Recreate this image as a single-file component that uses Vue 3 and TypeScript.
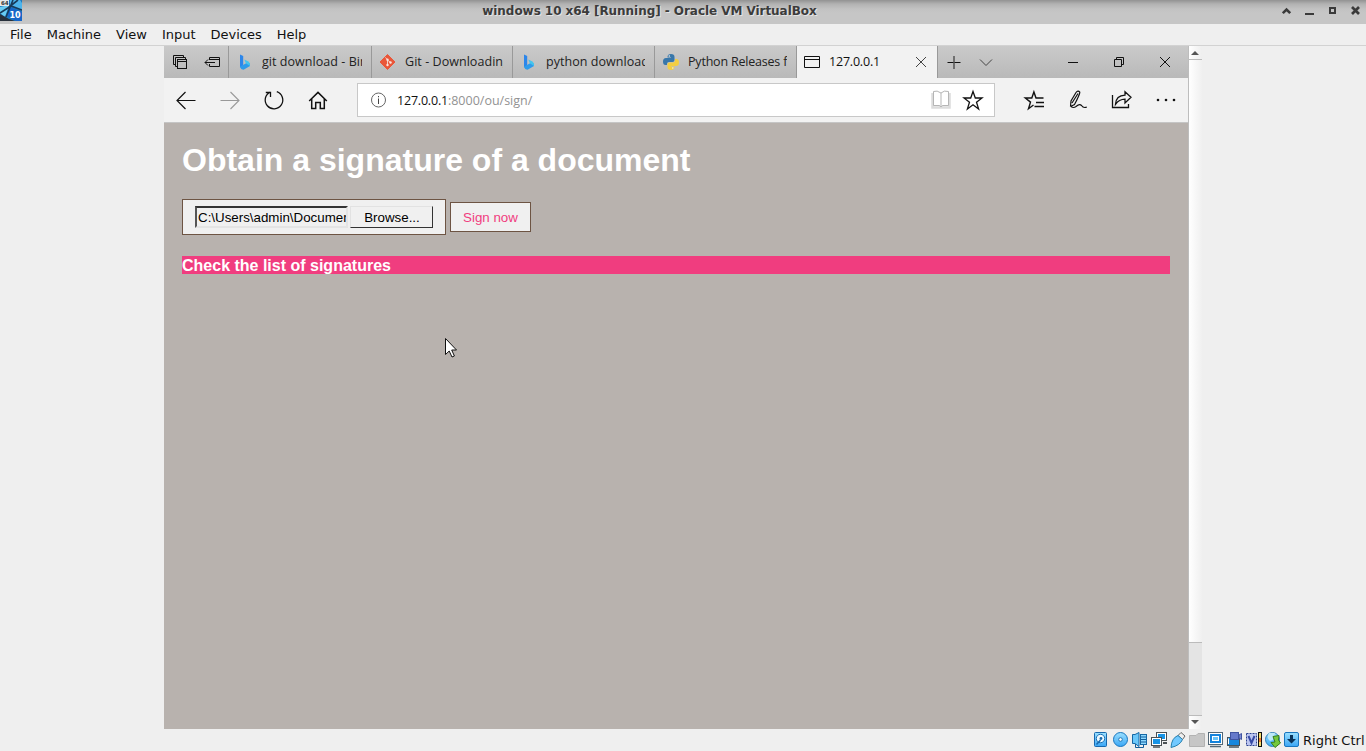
<script setup lang="ts">
interface BrowserTab {
  title: string
  icon: 'bing' | 'git' | 'python'
  width: number
}

const menus: string[] = ['File', 'Machine', 'View', 'Input', 'Devices', 'Help']

const tabs: BrowserTab[] = [
  { title: 'git download - Bing', icon: 'bing', width: 143 },
  { title: 'Git - Downloading', icon: 'git', width: 141 },
  { title: 'python download', icon: 'bing', width: 142 },
  { title: 'Python Releases for', icon: 'python', width: 142 },
]
</script>

<template>
  <div class="vm">
    <header class="titlebar">
      <svg class="app-icon" width="22" height="21" viewBox="0 0 22 21">
        <rect width="22" height="21" fill="#1d78bd" />
        <path d="M0 7L9 5L5 17L0 13Z" fill="#68cbf3" />
        <path d="M10 0H20L22 3V10L10 6Z" fill="#4db4ec" />
        <path d="M10 7L22 12V21H16L7 16Z" fill="#1665c8" />
        <path d="M0 14L9 19L15 21H0Z" fill="#28303c" />
        <path d="M13 0L6 17M0 13L11 6L22 10M9 7L18 0" stroke="#183a59" stroke-width="1.6" fill="none" />
        <rect width="9" height="6" fill="#e4e8ea" />
        <text x="1" y="5" font-size="5.5" class="icon-text" fill="#333">64</text>
        <text x="9.5" y="17.5" font-size="8" class="icon-text" fill="#fff">10</text>
      </svg>
      <h2>windows 10 x64 [Running] - Oracle VM VirtualBox</h2>
      <svg class="window-controls" width="84" height="24" viewBox="1282 0 84 24" fill="none" stroke="#3a3a3a">
        <path d="M1282.8 13.2L1286.5 9.5L1290.2 13.2" stroke-width="2.6" />
        <path d="M1305 14H1314" stroke-width="2" />
        <rect x="1330" y="8" width="5" height="5" stroke-width="2" />
        <path d="M1352 7L1359 14M1359 7L1352 14" stroke-width="2.7" />
      </svg>
    </header>

    <nav class="menubar"><span v-for="menu in menus" :key="menu">{{ menu }}</span></nav>

    <div class="viewport">
      <main class="guest">
        <div class="tabstrip">
          <svg class="tab-tools" width="64" height="32" viewBox="164 46 64 32" fill="none" stroke="#111">
            <path d="M175.500 64.500H173.500V55.500H183.500V57.500M177.500 66.500H175.500V57.500H185.500V59.500" />
            <rect x="177.500" y="59.500" width="9" height="9" />
            <path d="M177 61.500H187" />
            <path d="M209.500 60V57.500H219.500V66.500H209.500V64M209 59.500H220M205 62.500H215M208 59.500L205 62.500L208 65.500" />
          </svg>
          <div v-for="tab in tabs" :key="tab.title" class="tab" :class="tab.icon" :style="{ width: tab.width + 'px' }">
            <svg width="18" height="18" viewBox="0 0 18 18">
              <template v-if="tab.icon === 'bing'">
                <path d="M4 1.500L7.200 3V12.500L4 14.600Z" fill="#2c86ea" />
                <path d="M4 13.500L7 12L10.500 10L14 10.500V13L8 16.600Q5 17 4 14Z" fill="#2e9bea" />
                <path d="M8.300 6.500L12.500 8.500Q14.500 10 14 13L9.800 10.200Z" fill="#45c5ed" />
              </template>
              <template v-else-if="tab.icon === 'git'">
                <path d="M8.500 1.500L16 9L8.500 16.500L1 9Z" fill="#e9573a" stroke="#e9573a" stroke-linejoin="round" />
                <path d="M6.300 4.500L8.500 6.700V12M8.500 7L11.500 9.500" stroke="#f5cfc5" fill="none" />
                <g fill="#fae5df"><circle cx="8.500" cy="6.700" r="1.200" /><circle cx="8.500" cy="12" r="1.200" /><circle cx="11.500" cy="9.500" r="1.200" /></g>
              </template>
              <template v-else>
                <path d="M5.500 4Q5.500 1 9 1Q12.500 1 12.500 4V7Q12.500 9 10.500 9H7Q5 9 5 11V12H3.500Q1 12 1 8.500Q1 5 4 5H9V4.500H5.500Z" fill="#3877aa" />
                <path d="M12.500 14Q12.500 17 9 17Q5.500 17 5.500 14V11Q5.500 9.500 7.500 9.500H11Q13 9.500 13 7.500V6H14.500Q17 6 17 9.500Q17 13 14 13H9V13.500H12.500Z" fill="#f3ce42" />
                <circle cx="7.300" cy="3" r=".8" fill="#eee" /><circle cx="10.800" cy="15" r=".8" fill="#eee" />
              </template>
            </svg>
            <span>{{ tab.title }}</span>
          </div>
          <div class="tab active">
            <svg width="18" height="18" viewBox="0 0 18 18" fill="none" stroke="#111"><path d="M.5 3.500H15.500V14.500H.5ZM0 6.500H16" /></svg>
            <span>127.0.0.1</span>
            <svg class="close" width="12" height="12" viewBox="0 0 12 12" stroke="#444"><path d="M1 1L11 11M11 1L1 11" /></svg>
          </div>
          <svg class="strip-actions" width="250" height="32" viewBox="938 46 250 32" fill="none" stroke="#111">
            <path d="M947.500 62.500H960.500" /><path d="M954 56V69" stroke="#555" stroke-width="1.500" />
            <path d="M980 59.500L986 65.500L992 59.500" stroke="#444" />
            <path d="M1068 62.500H1078" />
            <path d="M1114.500 59.500H1121.500V66.500H1114.500ZM1116.500 59V57.500H1123.500V64.500H1122" />
            <path d="M1160 57L1170 67M1170 57L1160 67" />
          </svg>
        </div>

        <div class="navbar">
          <svg viewBox="0 0 44 44"><path d="M13 22.500H31.500M21.500 14L13 22.500L21.500 31" stroke-width="1.200" /></svg>
          <svg viewBox="0 0 44 44"><path class="disabled" d="M12.500 22.500H31M22.500 14L31 22.500L22.500 31" stroke-width="1.100" /></svg>
          <svg viewBox="0 0 44 44"><path d="M24.800 13.700A8.800 8.800 0 1 1 18.200 14.100M13.800 14.500H18.500V19" stroke-width="1.300" /></svg>
          <svg viewBox="0 0 44 44"><path d="M13.200 23L22 14.400L30.800 23M15.700 21V30.500H19.700V24.500H24.300V30.500H28.300V21" stroke-width="1.500" /></svg>
          <div class="address">
            <svg class="info" width="16" height="16" viewBox="0 0 16 16"><circle cx="8.500" cy="8" r="7" class="ring" /><path d="M8.500 6.500V12M8.500 4V5.300" /></svg>
            <p>127.0.0.1<span>:8000/ou/sign/</span></p>
            <svg class="book" width="20" height="20" viewBox="931 91 20 20"><path class="wide" d="M932.500 94V108.500H949.500V94" /><path d="M941 94V107M941 94Q937 91 933.500 92.500V106.500H939Q940 106.500 941 108Q942 106.500 943 106.500H948.500V92.500Q944 91 941 94" /></svg>
            <svg class="star" width="22" height="22" viewBox="962 89 22 22"><path d="M973 91.500L975.300 98H982L976.500 102.200L978.600 108.900L973 104.700L967.400 108.900L969.500 102.200L964 98H970.700Z" stroke-width="1.300" /></svg>
          </div>
          <svg viewBox="1012 78 44 44"><path d="M1043.500 98H1036L1033.900 91.900L1031.800 98H1025.300L1030.500 102.100L1028.500 108.700L1033.500 105M1036 102.500H1044M1034.500 106.500H1044" stroke-width="1.400" /></svg>
          <svg viewBox="1056 78 44 44"><path d="M1070.500 106.500L1071 101L1076 92.500Q1078 90 1079.800 92.200Q1080 94 1074.500 104.500L1070.500 106.500M1078 93.500L1072 103M1071 106.500Q1073.500 108.500 1076 106.500Q1079.500 103.500 1081.500 105.500Q1083.500 108.500 1086.800 107" stroke-width="1.200" /></svg>
          <svg viewBox="1100 78 44 44"><path d="M1112.500 95V107.500H1128.500V104M1115.500 104.300Q1116 95.500 1125 95.200V91.700L1131 97.300L1125 103V99.200Q1119 99.300 1115.500 104.300Z" stroke-width="1.300" /></svg>
          <svg viewBox="1144 78 44 44"><g class="dots"><circle cx="1158" cy="100" r="1.300" /><circle cx="1166" cy="100" r="1.300" /><circle cx="1174" cy="100" r="1.300" /></g></svg>
        </div>

        <section class="page">
          <h1>Obtain a signature of a document</h1>
          <form @submit.prevent>
            <div class="file-input">
              <div class="file-path">C:\Users\admin\Documents</div>
              <div class="browse">Browse...</div>
            </div>
            <button type="submit">Sign now</button>
          </form>
          <div class="list-link">Check the list of signatures</div>
          <svg class="cursor" width="13" height="21" viewBox="0 0 13 21"><path d="M.5 .5V16.500L4.200 13L7 19L9.400 18L6.700 12H11.500Z" fill="#fff" stroke="#111" /></svg>
        </section>
      </main>
      <aside class="scrollbar">
        <div class="arrow"><svg width="8" height="4" viewBox="0 0 8 4"><path d="M0 4L4 0L8 4Z" fill="#555" /></svg></div>
        <div class="thumb"></div>
        <div class="trough"></div>
        <div class="arrow down"><svg width="8" height="4" viewBox="0 0 8 4"><path d="M0 0H8L4 4Z" fill="#555" /></svg></div>
      </aside>
    </div>

    <footer class="statusbar">
      <svg width="212" height="18" viewBox="1091 731 212 18">
        <defs><linearGradient id="blue" x2="0" y2="1"><stop stop-color="#9be0ff" /><stop offset="1" stop-color="#3aa6f5" /></linearGradient></defs>
        <rect x="1094.500" y="732.500" width="12" height="14" rx="1" fill="url(#blue)" stroke="#1768ad" />
        <circle cx="1100.500" cy="738.500" r="4.200" fill="#eefaff" stroke="#1b70b5" /><circle cx="1101" cy="738.500" r="1.400" fill="#1768ad" /><path d="M1096.500 744.500L1100.500 740" stroke="#1768ad" stroke-width="1.500" />
        <circle cx="1120.500" cy="739.500" r="7" fill="url(#blue)" stroke="#1976bf" /><circle cx="1120.500" cy="739.500" r="1.800" fill="#fff" stroke="#2779b3" />
        <path d="M1132.500 734.500H1135L1139 732.500V746.500L1135 743.500H1132.500Z" fill="#6bc8fa" stroke="#1667a4" /><rect x="1140.500" y="734.500" width="6" height="10" fill="#8bd8ff" stroke="#1667a4" /><path d="M1141 737H1146M1141 739.500H1146M1141 742H1146M1135.500 744V747.500H1143.500V745" stroke="#125d9a" fill="none" />
        <g stroke="#4a5054"><rect x="1156.500" y="732.500" width="10" height="8" fill="#fff" /><rect x="1158" y="734" width="7" height="5" fill="#1894e6" stroke="none" /><path d="M1163 743H1167" stroke-width="2" /><rect x="1151.500" y="737.500" width="10" height="8" fill="#fff" /><rect x="1153" y="739" width="7" height="5" fill="#1894e6" stroke="none" /><path d="M1153 747H1160" stroke-width="1.500" /></g>
        <path d="M1181 732.500L1185 736L1182.500 739.500L1178 735.500Z" fill="#eee" stroke="#666" /><path d="M1178 735.500L1182.500 739.500Q1180 745.500 1171 747.500Q1171.500 738 1178 735.500Z" fill="#71c9ff" stroke="#257fae" />
        <path d="M1189.500 746.500V735.500H1196L1198 733.500H1204.500V746.500Z" fill="#c6c6c6" stroke="#b2b2b2" />
        <rect x="1208.500" y="732.500" width="14" height="12" fill="#fff" stroke="#546775" /><rect x="1210" y="734" width="11" height="9" fill="#1583dc" /><rect x="1212.500" y="736.500" width="6" height="4" fill="#66c3f9" stroke="#fff" /><path d="M1210 746.500H1221" stroke="#546775" stroke-width="1.500" />
        <rect x="1227.500" y="737.500" width="12" height="8" fill="#1787dc" stroke="#46545c" /><path d="M1228.500 744V738.500" stroke="#fff" /><rect x="1230.500" y="732.500" width="8" height="7" fill="#6679ca" stroke="#4154a0" /><path d="M1239 735L1241.500 733.500V739.500L1239 738Z" fill="#7d8bd5" stroke="#4154a0" /><path d="M1229 747H1239" stroke="#46545c" stroke-width="1.500" />
        <rect x="1246.500" y="733.500" width="10" height="12" fill="#bcc6f1" stroke="#2d4290" stroke-dasharray="2 1" /><path d="M1248.500 736L1251.500 743L1254.500 736" fill="none" stroke="#374aa4" stroke-width="2" /><rect x="1258" y="732" width="4" height="15" fill="#111" /><rect x="1259" y="733" width="2" height="13" fill="#f4dc6c" /><path d="M1260 738V742" stroke="#f07b31" stroke-width="2" />
        <circle cx="1272.500" cy="739.500" r="7" fill="url(#blue)" stroke="#3482b8" /><path d="M1269 733Q1266 738 1270 741L1273 740L1275 733" fill="#bde8f7" /><path d="M1273 736.500L1279 735.500L1278.500 740L1280.500 743L1275 747.500L1271 742.500L1275 742Z" fill="#74c83c" stroke="#367f1c" />
        <rect x="1284.500" y="732.500" width="14" height="14" rx="1.500" fill="url(#blue)" stroke="#1976bf" /><path d="M1290 735H1293V739H1296L1291.500 743.500L1287 739H1290Z" fill="#08335a" />
      </svg>
      <span>Right Ctrl</span>
    </footer>
  </div>
</template>

<style>
body { margin: 0; overflow: hidden; }
</style>

<style scoped>
* { box-sizing: border-box; }
.vm { width: 1366px; height: 751px; background: #efefef; display: flex; flex-direction: column; font-family: "DejaVu Sans", sans-serif; overflow: hidden; }
svg { display: block; flex: none; }
.titlebar { height: 24px; flex: none; display: flex; background: linear-gradient(#929292, #b2b2b2 4px, #c2c2c2 9px, #c6c6c6 13px); }
.icon-text { font-family: "DejaVu Sans", sans-serif; font-weight: bold; }
h2 { flex: 1; margin: 0 5px 0 0; text-align: center; font-size: 12px; letter-spacing: -.05px; line-height: 22px; color: #3b3b3b; text-shadow: 1px 1px #e4e4e4; white-space: nowrap; }
.menubar { height: 22px; flex: none; display: flex; padding-left: 10px; gap: 15px; font-size: 13px; letter-spacing: -.01px; line-height: 21px; border-bottom: 1px solid #d2d2d2; color: #111; }
.viewport { height: 683px; flex: none; padding-left: 164px; display: flex; }
.guest { width: 1024px; display: flex; flex-direction: column; font-family: "Open Sans", "Noto Sans", sans-serif; }
.tabstrip { height: 32px; flex: none; display: flex; background: linear-gradient(#cacaca, #b9b9b9); }
.tab { border-left: 1px solid #999; display: flex; align-items: center; padding-left: 7px; padding-right: 9px; overflow: hidden; flex: none; font-size: 12.5px; letter-spacing: .05px; color: #222; }
.tab span { margin-left: 8px; white-space: nowrap; overflow: hidden; flex: 1; line-height: 20px; }
.tab.python { letter-spacing: -.2px; }
.tab.active { width: 142px; background: #f2f2f2; border-right: 1px solid #999; color: #111; letter-spacing: -.2px; }
.tab.active span { margin-left: 7px; }
.tab .close { margin-right: 1px; }
.navbar { height: 45px; flex: none; display: flex; background: #f2f2f2; border-bottom: 1px solid #c5c5c5; }
.navbar > svg { width: 44px; height: 44px; }
.navbar svg { fill: none; stroke: #111; }
.navbar .disabled { stroke: #999; }
.navbar .dots { fill: #111; stroke: none; }
.address { width: 638px; height: 34px; margin: 5px 17px 0; border: 1px solid #c8c8c8; background: #fff; display: flex; align-items: center; padding: 0 10px 0 12px; }
.address .info { stroke: #444; }
.address .ring { stroke: #666; }
.address .book { stroke: #b5b5b5; }
.address .wide { stroke: #dcdcdc; stroke-width: 2.5; }
.address p { flex: 1; margin: 0 0 0 11px; font-size: 12.5px; letter-spacing: -.2px; color: #111; }
.address p span { color: #929292; letter-spacing: 0; }
.address .star { margin-left: 11px; }
.page { position: relative; flex: 1; background: #b8b2ae; padding: 18px 18px 0; font-family: "Liberation Sans", Arial, sans-serif; }
h1 { margin: 0; color: #fff; font-size: 32px; line-height: 39px; height: 58px; }
form { display: flex; align-items: center; gap: 4px; height: 36px; font-size: 13.333px; }
.file-input { width: 264px; height: 36px; border: 1px solid #6d5443; background: #f0f0f0; display: flex; padding: 6px 12px; gap: 2px; }
.file-path { width: 153px; height: 22px; padding-left: 1px; border: 2px solid #e4e4e4; border-top-color: #333; border-left-color: #555; line-height: 20px; white-space: nowrap; overflow: hidden; color: #000; }
.browse { width: 83px; height: 22px; border: 1px solid #e2e2e2; border-right-color: #333; border-bottom-color: #333; line-height: 22px; padding-left: 1px; text-align: center; }
button { width: 81px; height: 30px; padding: 0; border: 1px solid #6d5443; background: #f0f0f0; color: #f03d7f; font: 13.333px "Liberation Sans", Arial, sans-serif; }
.list-link { margin-top: 21px; height: 18px; background: #f03d7f; color: #fff; font-size: 16px; font-weight: bold; line-height: 20px; }
.cursor { position: absolute; left: 281px; top: 215px; }
.scrollbar { width: 14px; display: flex; flex-direction: column; border-left: 1px solid #bdbdbd; }
.arrow { height: 14px; display: flex; align-items: center; justify-content: center; background: linear-gradient(90deg, #fff, #eee); border-bottom: 1px solid #bbb; }
.arrow svg { margin-right: 1px; }
.thumb { height: 583px; background: linear-gradient(90deg, #fff, #f0f0f0); border-bottom: 1px solid #bbb; }
.trough { height: 73px; background: #e4e4e4; border-bottom: 1px solid #bbb; }
.arrow.down { height: 13px; border: 0; align-items: flex-start; padding-top: 4px; }
.statusbar { height: 22px; flex: none; display: flex; align-items: center; padding-left: 1091px; font-size: 13px; color: #111; white-space: nowrap; }
</style>
